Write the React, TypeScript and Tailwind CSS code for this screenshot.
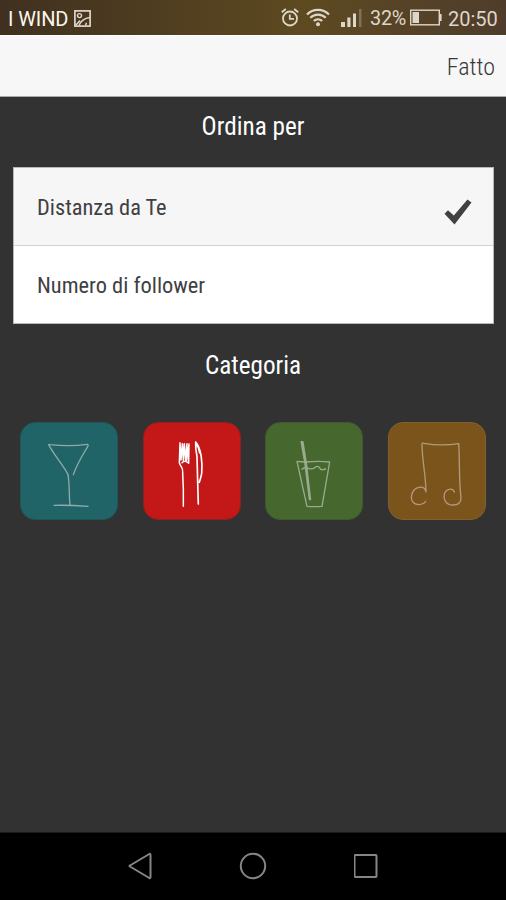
import type { ReactNode } from "react";

const sortOptions = [
  { label: "Distanza da Te", selected: true },
  { label: "Numero di follower", selected: false },
];

function StatusBar() {
  return (
    <div className="flex h-[35px] items-center bg-linear-to-r from-[#40301f] via-[#5d4a20] via-60% to-[#4f3c2c] font-[Roboto,sans-serif] font-stretch-normal text-[#ded6c8]">
      <span className="ml-[8px] mt-[3px] w-[66px] whitespace-nowrap text-[20px] tracking-[-0.1px] text-[#fbf6ec]">I WIND</span>
      <svg className="mt-px h-[17px] w-[17px]" viewBox="0 0 17 17" fill="none" stroke="currentColor" strokeWidth="1.7">
        <rect x="0.9" y="0.9" width="15.2" height="15.2" />
        <circle cx="5.5" cy="5.6" r="2" strokeWidth="1.4" />
        <path d="M5 15.500C6.500 11.500 10 8.300 16 7.500M1.500 15.500 6 10.500M11.500 15.500 12.500 12.800" strokeWidth="1.5" />
      </svg>
      <div className="ml-auto flex items-center">
        <svg className="h-[19px] w-[18px]" viewBox="0 0 18 19" fill="none" stroke="currentColor" strokeWidth="1.8">
          <circle cx="9" cy="10.500" r="7" />
          <path d="M8.800 6.500v4.300H13M0.800 4.300 4.800 1M17.200 4.300 13.200 1" />
        </svg>
        <svg className="ml-[7px] h-[19px] w-[24px]" viewBox="0 0 24 19" fill="none" stroke="currentColor" strokeWidth="2.200">
          <path d="M1 6.500C7 0.300 17 0.300 23 6.500M4.300 9.800C8.500 5.500 15.500 5.500 19.700 9.800M7.800 13C10.200 10.700 13.800 10.700 16.200 13" />
          <circle cx="12" cy="16.300" r="2" fill="currentColor" stroke="none" />
        </svg>
        <svg className="ml-[11px] h-[18px] w-[21px]" viewBox="0 0 21 18" fill="currentColor">
          <path d="M0 13h4v5H0zM6.300 8.500h3.200V18H6.300zM12 4.500h3V18h-3z" />
          <path d="M18 0h2.500v18H18z" opacity="0.3" />
        </svg>
        <span className="ml-[8px] mt-[3px] w-[38px] whitespace-nowrap text-[19.800px] tracking-[-0.200px]">32%</span>
        <svg className="ml-[2px] h-[17px] w-[32px]" viewBox="0 0 32 17" fill="none" stroke="currentColor" strokeWidth="1.400">
          <rect x="0.700" y="1.200" width="28.600" height="14.600" />
          <path d="M2.500 3h6.500v11H2.500z" fill="currentColor" stroke="none" />
          <path d="M30.800 5v7" strokeWidth="1.600" />
        </svg>
        <span className="ml-[6px] mt-[2px] mr-[8px] w-[50px] whitespace-nowrap text-[20px]">20:50</span>
      </div>
    </div>
  );
}

function Tile({ color, viewBox, children }: { color: string; viewBox: string; children: ReactNode }) {
  return (
    <button className={`h-[98px] w-[98px] rounded-[15px] border ${color}`}>
      <svg className="-m-px h-[98px] w-[98px]" viewBox={viewBox} fill="none" strokeLinecap="round" strokeLinejoin="round">
        {children}
      </svg>
    </button>
  );
}

export default function App() {
  return (
    <div className="flex h-[900px] w-[506px] flex-col overflow-hidden bg-[#323232] font-['Roboto_Condensed',Roboto,sans-serif] font-stretch-condensed">
      <StatusBar />
      <header className="flex h-[62px] items-center justify-end border-t border-b border-t-white border-b-[#aaaaaa] bg-[#f7f7f7] pt-px pr-[11px]">
        <button className="text-[24px] font-light text-[#383838]">Fatto</button>
      </header>

      <main className="flex-1">
        <h2 className="mt-[12px] text-center text-[25.2px] leading-9 text-white">Ordina per</h2>
        <ul className="mx-[12.5px] mt-[22px] border border-[#b8b8b8] bg-white">
          {sortOptions.map((o) => (
            <li key={o.label} className={`flex items-center justify-between pl-[23.5px] pr-5 ${o.selected ? "h-[78px] border-b border-[#d0d0d0] bg-[#f6f6f6] pt-[3px]" : "h-[77px] pt-[2px]"}`}>
              <span className="text-[22.4px] text-[#404042]">{o.label}</span>
              {o.selected && (
                <svg className="mt-[8px] mr-[0.5px] h-[26px] w-[28px]" viewBox="0 0 28 26" fill="#414143">
                  <path d="M0.500 14.700 4 11.200 9.800 16.500 23.500 0.500 27.500 3.600 10.500 25.500Z" />
                </svg>
              )}
            </li>
          ))}
        </ul>
        <h2 className="mt-[24px] text-center text-[25.2px] leading-9 text-white">Categoria</h2>

        <div className="mt-[38px] flex justify-between px-5">
          <Tile color="border-[#205659] bg-[#206467]" viewBox="30 36 294 294">
            <path d="M175 196C163 169 139 145 117 106Q114 102 121 104Q180 110 232 103Q236 103 233 110C216 139 203 157 190 194M173 190C180 220 176 251 180 284M132 286Q180 285 234 289" stroke="#8eaaaa" strokeWidth="4" />
          </Tile>
          <Tile color="border-[#8d2020] bg-[#c41717]" viewBox="32 36 294 294">
            <path d="M143 98 141 158C146 174 153 172 151 188Q154 235 153 289M143 100 146 150 150 101 153 151 156 101 160 151 164 101 163 151 170 102 169 160Q158 148 149 158" stroke="#fff" strokeWidth="4.500" />
            <path d="M190 96C207 115 211 158 208 191Q205 205 201 217M190 96Q189 115 194 139L196 215 198 282M192 101Q200 112 202 129" stroke="#fff" strokeWidth="5" />
          </Tile>
          <Tile color="border-[#41592e] bg-[#46672e]" viewBox="30 36 294 294">
            <path d="M148 156 126 154 156 289Q178 291 201 289L224 156Q190 152 153 156M141 178Q151 169 160 175Q174 180 182 171Q190 165 197 178Q202 180 212 177" stroke="#9aab8d" strokeWidth="4" />
            <path d="M138 95H144L154 157 167 269H163L149 157ZM142 98 151 156 165 267" stroke="#9aab8d" strokeWidth="3.500" />
          </Tile>
          <Tile color="border-[#82602e] bg-[#7b541c]" viewBox="30 36 294 294">
            <path d="M144 246C143 193 133 155 132 105Q131 97 138 100Q188 109 242 101C246 156 242 207 249 263C249 280 239 285 224 285C203 285 195 266 199 253C203 236 224 232 229 246M144 246C142 224 110 229 103 249C94 274 109 284 122 284Q139 283 143 274" stroke="#b3987a" strokeWidth="4" />
          </Tile>
        </div>
      </main>

      <nav className="flex h-[68px] items-center justify-center gap-[87px] border-t border-[#1c1c1c] bg-black pr-[2px] pb-px">
        <svg className="h-[28px] w-[26px]" viewBox="0 0 26 28" fill="none" stroke="#858585" strokeWidth="2" strokeLinejoin="round">
          <path d="M4 13.500Q3 14 4 14.500L23.300 26Q24.500 26.500 24.500 25V3Q24.500 1.500 23.300 2Z" />
        </svg>
        <svg className="h-[28px] w-[28px]" viewBox="0 0 28 28" fill="none" stroke="#858585" strokeWidth="2">
          <circle cx="14" cy="14" r="12.200" />
        </svg>
        <svg className="h-[26px] w-[24px]" viewBox="0 0 24 26" fill="none" stroke="#858585" strokeWidth="2">
          <rect x="0.500" y="2" width="22" height="22" rx="0.800" />
        </svg>
      </nav>
    </div>
  );
}
